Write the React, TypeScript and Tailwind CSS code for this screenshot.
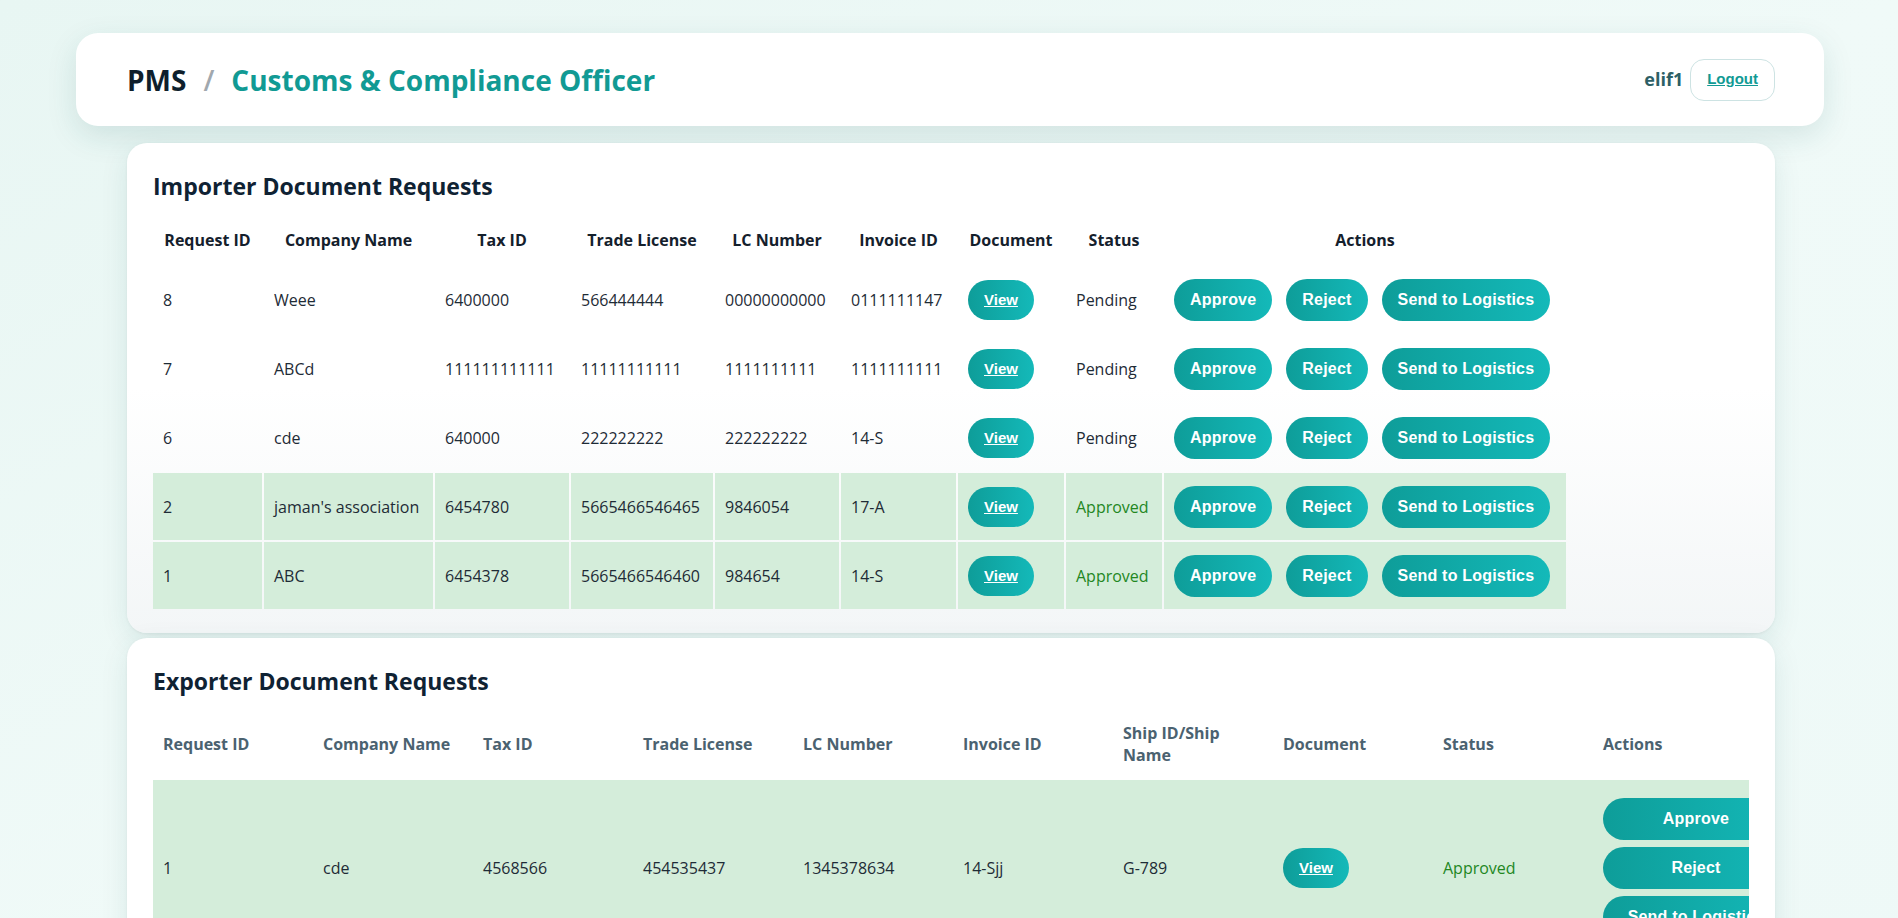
import React from "react";

const FONT = { fontFamily: '"Open Sans", "Noto Sans", sans-serif' };

function ActionBtn({ label, wide }: { label: string; wide?: boolean }) {
  return (
    <button
      className={
        "rounded-full bg-gradient-to-r from-[#0e9d99] to-[#14b9b9] text-white font-bold text-[16px] leading-[18px] py-3 tracking-[0.2px] " +
        (wide ? "w-[186px] text-center" : "px-4")
      }
      style={{ fontFamily: '"Liberation Sans", Arial, sans-serif' }}
    >
      {label}
    </button>
  );
}

function ViewBtn() {
  return (
    <button
      className="rounded-full bg-gradient-to-r from-[#0e9d99] to-[#14b9b9] text-white font-bold text-[15px] leading-[16px] py-3 px-4 underline"
      style={{ fontFamily: '"Liberation Sans", Arial, sans-serif' }}
    >
      View
    </button>
  );
}

const importerRows = [
  { id: "8", name: "Weee", tax: "6400000", tl: "566444444", lc: "00000000000", inv: "0111111147", status: "Pending" },
  { id: "7", name: "ABCd", tax: "111111111111", tl: "11111111111", lc: "1111111111", inv: "1111111111", status: "Pending" },
  { id: "6", name: "cde", tax: "640000", tl: "222222222", lc: "222222222", inv: "14-S", status: "Pending" },
  { id: "2", name: "jaman's association", tax: "6454780", tl: "5665466546465", lc: "9846054", inv: "17-A", status: "Approved" },
  { id: "1", name: "ABC", tax: "6454378", tl: "5665466546460", lc: "984654", inv: "14-S", status: "Approved" },
];

const impCols = [109, 169, 134, 142, 124, 115, 106, 96, 402];
const impHeads = ["Request ID", "Company Name", "Tax ID", "Trade License", "LC Number", "Invoice ID", "Document", "Status", "Actions"];

const expHeads = ["Request ID", "Company Name", "Tax ID", "Trade License", "LC Number", "Invoice ID", "Ship ID/Ship Name", "Document", "Status", "Actions"];

export default function App() {
  return (
    <div
      className="min-h-screen w-full bg-gradient-to-br from-[#e8f6f3] via-[#f0faf8] to-[#eef9f7] pt-[33px] pb-10 text-[#1e2b36]"
      style={FONT}
    >
      <div className="w-[1748px] ml-[76px]">
        {/* Header */}
        <div className="h-[93px] bg-white rounded-[22px] shadow-[0_10px_30px_rgba(20,90,90,0.13)] flex items-center justify-between pl-[51px] pr-[49px]">
          <div className="flex items-center text-[28px] font-bold leading-none">
            <span className="text-[#0f1f2c]">PMS</span>
            <span className="text-[#a1a8ae] mx-[17px] font-semibold">/</span>
            <span className="text-[#119a94]">Customs &amp; Compliance Officer</span>
          </div>
          <div className="flex items-center gap-[7px]">
            <span className="text-[18px] font-bold text-[#2d5f66]">elif1</span>
            <button
              className="border border-[#cde3e3] rounded-[14px] h-[42px] px-[16px] text-[15px] font-bold text-[#119a94] underline bg-white"
              style={{ fontFamily: '"Liberation Sans", Arial, sans-serif' }}
            >
              Logout
            </button>
          </div>
        </div>

        {/* Importer */}
        <div className="mt-[17px] ml-[51px] mr-[49px] rounded-[20px] bg-gradient-to-b from-white via-white to-[#f3f6f7] shadow-[0_8px_28px_rgba(20,90,90,0.10),0_1px_3px_rgba(0,0,0,0.06)] pt-[27px] pb-[22px] px-[26px]">
          <h2 className="text-[23px] leading-[32px] font-bold text-[#0f2233] mb-[12px]">Importer Document Requests</h2>
          <table className="table-fixed border-separate border-spacing-[2px] -ml-[2px]">
            <colgroup>
              {impCols.map((w, i) => (
                <col key={i} style={{ width: w }} />
              ))}
            </colgroup>
            <thead>
              <tr>
                {impHeads.map((h) => (
                  <th key={h} className="py-3 px-[6px] leading-6 text-[16px] font-bold text-[#14202c] text-center whitespace-nowrap">
                    {h}
                  </th>
                ))}
              </tr>
            </thead>
            <tbody>
              {importerRows.map((r) => {
                const ok = r.status === "Approved";
                const td = "px-[10px] py-[12.5px] text-[16px] align-middle whitespace-nowrap " + (ok ? "bg-[#d4edda]" : "");
                return (
                  <tr key={r.id}>
                    <td className={td}>{r.id}</td>
                    <td className={td}>{r.name}</td>
                    <td className={td}>{r.tax}</td>
                    <td className={td}>{r.tl}</td>
                    <td className={td}>{r.lc}</td>
                    <td className={td}>{r.inv}</td>
                    <td className={td}>
                      <ViewBtn />
                    </td>
                    <td className={td + (ok ? " text-[#23871f]" : "")}>{r.status}</td>
                    <td className={td}>
                      <div className="flex items-center gap-[14px]">
                        <ActionBtn label="Approve" />
                        <ActionBtn label="Reject" />
                        <ActionBtn label="Send to Logistics" />
                      </div>
                    </td>
                  </tr>
                );
              })}
            </tbody>
          </table>
        </div>

        {/* Exporter */}
        <div className="mt-[5px] ml-[51px] mr-[49px] rounded-[20px] bg-white shadow-[0_8px_28px_rgba(20,90,90,0.10),0_1px_3px_rgba(0,0,0,0.06)] pt-[27px] pb-[22px] px-[26px]">
          <h2 className="text-[23px] leading-[32px] font-bold text-[#0f2233] mb-[11px]">Exporter Document Requests</h2>
          <div className="overflow-hidden">
            <table className="table-fixed border-collapse w-[1646px]">
              <colgroup>
                {expHeads.map((h, i) => (
                  <col key={h} style={{ width: i === 9 ? 206 : 160 }} />
                ))}
              </colgroup>
              <thead>
                <tr>
                  {expHeads.map((h) => (
                    <th key={h} className="py-[14px] px-[10px] leading-[22px] text-[16px] font-bold text-[#4b6270] text-left align-middle">
                      {h}
                    </th>
                  ))}
                </tr>
              </thead>
              <tbody>
                <tr className="bg-[#d4edda]">
                  <td className="px-[10px] py-[18px] text-[16px]">1</td>
                  <td className="px-[10px] py-[18px] text-[16px]">cde</td>
                  <td className="px-[10px] py-[18px] text-[16px]">4568566</td>
                  <td className="px-[10px] py-[18px] text-[16px]">454535437</td>
                  <td className="px-[10px] py-[18px] text-[16px]">1345378634</td>
                  <td className="px-[10px] py-[18px] text-[16px]">14-Sjj</td>
                  <td className="px-[10px] py-[18px] text-[16px]">G-789</td>
                  <td className="px-[10px] py-[18px] text-[16px]">
                    <ViewBtn />
                  </td>
                  <td className="px-[10px] py-[18px] text-[16px] text-[#23871f]">Approved</td>
                  <td className="px-[10px] py-[18px] text-[16px]">
                    <div className="flex flex-col gap-[7px]">
                      <ActionBtn label="Approve" wide />
                      <ActionBtn label="Reject" wide />
                      <ActionBtn label="Send to Logistics" wide />
                    </div>
                  </td>
                </tr>
              </tbody>
            </table>
          </div>
        </div>
      </div>
    </div>
  );
}
